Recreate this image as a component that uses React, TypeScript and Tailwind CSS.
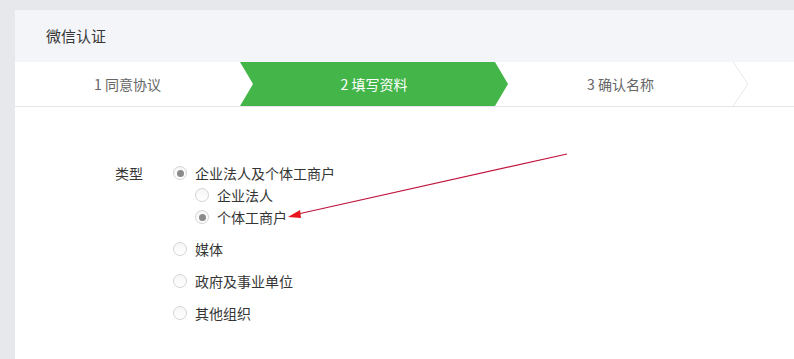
import React from "react";

const font = { fontFamily: '"Microsoft YaHei", "Noto Sans CJK SC", "Noto Sans", sans-serif' };

function Radio({ checked }: { checked?: boolean }) {
  return (
    <span className="flex h-[14px] w-[14px] shrink-0 items-center justify-center rounded-full border border-[#d4d4d4] bg-gradient-to-b from-[#f6f6f6] to-white">
      {checked && <span className="h-[7px] w-[7px] rounded-full bg-[#8a8a8a]" />}
    </span>
  );
}

function Option({ label, checked }: { label: string; checked?: boolean }) {
  return (
    <div className="flex h-[22px] items-center gap-[8px]">
      <Radio checked={checked} />
      <span className="text-[14px] leading-[22px] text-[#353535]">{label}</span>
    </div>
  );
}

export default function App() {
  return (
    <div className="relative h-[359px] w-[794px] overflow-hidden bg-[#e7e8eb] pl-[15px] pt-[10px]" style={font}>
      <div className="h-[400px] w-[800px] bg-white">
        <div className="flex h-[52px] items-center bg-[#f4f5f9] pl-[31px] text-[15px] text-[#353535]">微信认证</div>
        <div className="flex h-[45px] border-b border-[#e4e5e8]">
          <div className="flex w-[225px] items-center justify-center text-[14px] text-[#666]">1 同意协议</div>
          <div
            className="flex w-[268px] items-center justify-center bg-[#44b549] text-[14px] text-white"
            style={{ clipPath: "polygon(0 0, calc(100% - 13px) 0, 100% 50%, calc(100% - 13px) 100%, 0 100%, 13px 50%)" }}
          >
            2 填写资料
          </div>
          <div className="flex w-[225px] items-center justify-center text-[14px] text-[#666]">3 确认名称</div>
          <svg width="16" height="44" viewBox="0 0 16 44" className="shrink-0">
            <polyline points="0,0 15,22 0,44" fill="none" stroke="#e8e8e8" strokeWidth="1" />
          </svg>
        </div>
        <div className="flex pl-[100px] pt-[55px]">
          <div className="w-[58px] text-[14px] leading-[22px] text-[#353535]">类型</div>
          <div className="flex flex-col gap-[10px]">
            <div className="flex flex-col">
              <Option label="企业法人及个体工商户" checked />
              <div className="flex flex-col pl-[22px]">
                <Option label="企业法人" />
                <Option label="个体工商户" checked />
              </div>
            </div>
            <Option label="媒体" />
            <Option label="政府及事业单位" />
            <Option label="其他组织" />
          </div>
        </div>
      </div>
      <svg className="pointer-events-none absolute left-0 top-0" width="794" height="359" viewBox="0 0 794 359">
        <line x1="567" y1="154" x2="298" y2="214" stroke="#c0143c" strokeWidth="1.2" />
        <polygon points="288,217 300,210 301,218" fill="#e8141e" />
      </svg>
    </div>
  );
}
